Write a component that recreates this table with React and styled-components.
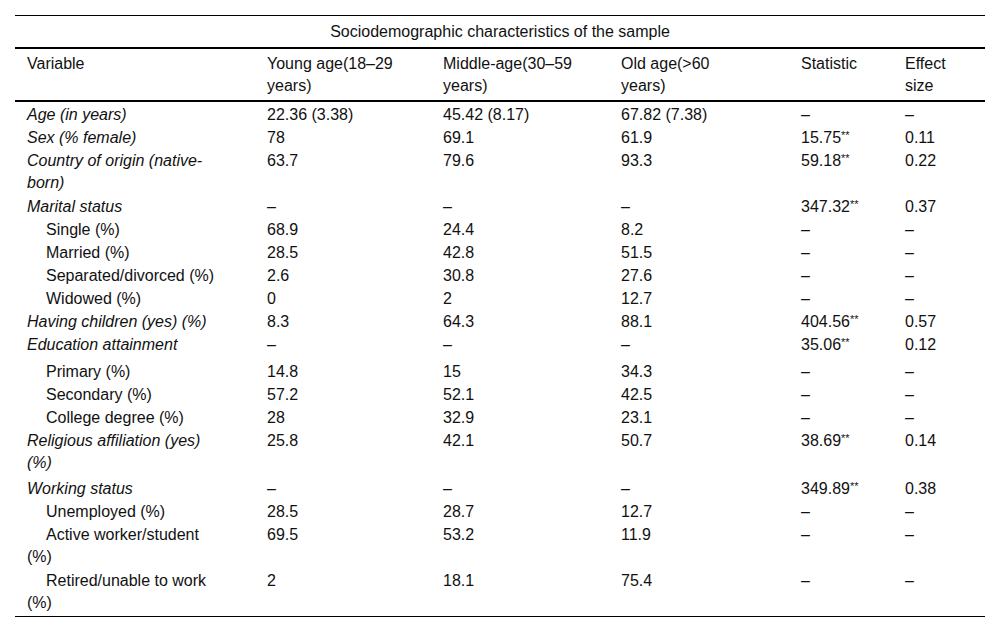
import styled, { createGlobalStyle } from "styled-components";

const GlobalStyle = createGlobalStyle`
  body {
    margin: 0;
    background: #fff;
    font-family: "Liberation Sans", Arial, sans-serif;
    color: #111;
  }
`;

const Page = styled.div`
  padding: 15px 15px 0;
`;

const Table = styled.table`
  width: 970px;
  table-layout: fixed;
  border-collapse: collapse;
  font-size: 16px;
  line-height: 22px;
  border-top: 1px solid #000;
  border-bottom: 1px solid #000;
`;

const TitleCell = styled.th`
  font-weight: normal;
  text-align: center;
  padding: 5px 12px 4px;
  border-bottom: 2px solid #000;
`;

const HeadCell = styled.th`
  font-weight: normal;
  text-align: left;
  vertical-align: top;
  white-space: pre-line;
  padding: 4px 12px 3px;
  border-bottom: 2px solid #000;
`;

const Row = styled.tr`
  td {
    padding-bottom: ${(p) => p.$gap || 0}px;
  }
  &:first-child td {
    padding-top: 2px;
  }
  &:last-child td {
    padding-bottom: 2px;
  }
`;

const Cell = styled.td`
  vertical-align: top;
  padding: 1px 12px 0;
  font-style: ${(p) => (p.$italic ? "italic" : "normal")};
  text-indent: ${(p) => (p.$indent ? "19px" : "0")};

  &:first-child {
    padding-right: 34px;
  }
`;

const Stars = styled.span`
  font-size: 11px;
  line-height: 0;
  vertical-align: 4px;
`;

const widths = [240, 176, 178, 180, 104, 92];

const headers = [
  "Variable",
  "Young age(18–29\nyears)",
  "Middle-age(30–59\nyears)",
  "Old age(>60\nyears)",
  "Statistic",
  "Effect\nsize",
];

const rows = [
  { label: "Age (in years)", italic: true, v: ["22.36 (3.38)", "45.42 (8.17)", "67.82 (7.38)", "–", "–"] },
  { label: "Sex (% female)", italic: true, v: ["78", "69.1", "61.9", "15.75", "0.11"], sig: true },
  { label: "Country of origin (native-born)", italic: true, gap: 1, v: ["63.7", "79.6", "93.3", "59.18", "0.22"], sig: true },
  { label: "Marital status", italic: true, v: ["–", "–", "–", "347.32", "0.37"], sig: true },
  { label: "Single (%)", indent: true, v: ["68.9", "24.4", "8.2", "–", "–"] },
  { label: "Married (%)", indent: true, v: ["28.5", "42.8", "51.5", "–", "–"] },
  { label: "Separated/divorced (%)", indent: true, v: ["2.6", "30.8", "27.6", "–", "–"] },
  { label: "Widowed (%)", indent: true, v: ["0", "2", "12.7", "–", "–"] },
  { label: "Having children (yes) (%)", italic: true, v: ["8.3", "64.3", "88.1", "404.56", "0.57"], sig: true },
  { label: "Education attainment", italic: true, gap: 4, v: ["–", "–", "–", "35.06", "0.12"], sig: true },
  { label: "Primary (%)", indent: true, v: ["14.8", "15", "34.3", "–", "–"] },
  { label: "Secondary (%)", indent: true, v: ["57.2", "52.1", "42.5", "–", "–"] },
  { label: "College degree (%)", indent: true, v: ["28", "32.9", "23.1", "–", "–"] },
  { label: "Religious affiliation (yes) (%)", italic: true, gap: 3, v: ["25.8", "42.1", "50.7", "38.69", "0.14"], sig: true },
  { label: "Working status", italic: true, v: ["–", "–", "–", "349.89", "0.38"], sig: true },
  { label: "Unemployed (%)", indent: true, v: ["28.5", "28.7", "12.7", "–", "–"] },
  { label: "Active worker/student (%)", indent: true, gap: 1, v: ["69.5", "53.2", "11.9", "–", "–"] },
  { label: "Retired/unable to work (%)", indent: true, v: ["2", "18.1", "75.4", "–", "–"] },
];

export default function App() {
  return (
    <>
      <GlobalStyle />
      <Page>
        <Table>
          <colgroup>
            {widths.map((w, i) => (
              <col key={i} style={{ width: w }} />
            ))}
          </colgroup>
          <thead>
            <tr>
              <TitleCell colSpan={6}>Sociodemographic characteristics of the sample</TitleCell>
            </tr>
            <tr>
              {headers.map((h) => (
                <HeadCell key={h}>{h}</HeadCell>
              ))}
            </tr>
          </thead>
          <tbody>
            {rows.map((r) => (
              <Row key={r.label} $gap={r.gap}>
                <Cell $italic={r.italic} $indent={r.indent}>
                  {r.label}
                </Cell>
                {r.v.map((val, i) => (
                  <Cell key={i}>
                    {val}
                    {r.sig && i === 3 ? <Stars>**</Stars> : null}
                  </Cell>
                ))}
              </Row>
            ))}
          </tbody>
        </Table>
      </Page>
    </>
  );
}
